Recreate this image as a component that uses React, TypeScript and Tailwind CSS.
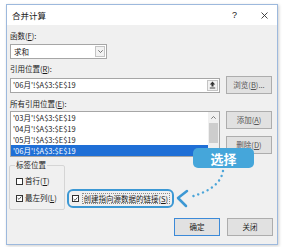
import React from 'react'

const U = ({ c }: { c: string }) => <span className="underline underline-offset-[1px]">{c}</span>

const Btn = ({ children, primary }: { children: React.ReactNode; primary?: boolean }) => (
  <div
    className={`w-[46px] h-[18px] flex items-center justify-center bg-[#e1e1e1] border ${
      primary ? 'border-[#3c8ad8]' : 'border-[#adadad]'
    }`}
  >
    {children}
  </div>
)

const Check = ({ checked }: { checked?: boolean }) => (
  <div className="w-[7px] h-[7px] border border-[#333] bg-white flex items-center justify-center shrink-0">
    {checked && (
      <svg width="6" height="6" viewBox="0 0 6 6">
        <path d="M0.8 3.1 L2.4 4.6 L5.2 1.2" fill="none" stroke="#222" strokeWidth="0.9" />
      </svg>
    )}
  </div>
)

const refs = ["'03月'!$A$3:$E$19", "'04月'!$A$3:$E$19", "'05月'!$A$3:$E$19", "'06月'!$A$3:$E$19"]

export default function App() {
  return (
    <div className="w-[283px] h-[247px] bg-white pt-[4px] pl-[6px] overflow-hidden font-['Noto_Sans_CJK_SC','Noto_Sans',sans-serif] text-[#1a1a1a]">
      <div className="relative w-[272px] h-[241px] border border-[#9db9dd] bg-[#f0f0f0] shadow-[1px_1px_3px_rgba(0,0,0,0.2)] flex flex-col">
        {/* title bar */}
        <div className="h-[20px] bg-white flex items-center pl-[5px] pr-[9px] shrink-0">
          <span className="text-[8.5px] leading-none">合并计算</span>
          <span className="ml-auto text-[9px] leading-none font-['Liberation_Sans',sans-serif]">?</span>
          <svg className="ml-[24px]" width="7" height="7" viewBox="0 0 7 7">
            <path d="M0.5 0.5 L6.5 6.5 M6.5 0.5 L0.5 6.5" stroke="#333" strokeWidth="0.9" />
          </svg>
        </div>

        {/* body */}
        <div className="flex-1 flex flex-col pl-[3px] pr-[4px] text-[7.5px] leading-[10px]">
          <div className="mt-[6px] h-[10px]">
            函数(<U c="F" />):
          </div>
          <div className="mt-[3px] w-[97px] h-[15px] border border-[#a6a6a6] bg-white flex items-center pl-[3px]">
            <span>求和</span>
            <div className="ml-auto mr-[1px] w-[10px] h-[11px] border border-[#c4c4c4] bg-[#f2f2f2] flex items-center justify-center">
              <svg width="5" height="3" viewBox="0 0 5 3">
                <path d="M0.3 0.3 L2.5 2.5 L4.7 0.3" fill="none" stroke="#555" strokeWidth="0.8" />
              </svg>
            </div>
          </div>

          <div className="mt-[5px] h-[10px]">
            引用位置(<U c="R" />):
          </div>
          <div className="mt-[2px] h-[18px] flex items-center gap-[6px]">
            <div className="w-[210px] h-[15px] border border-[#a6a6a6] bg-white flex items-center pl-[2px]">
              <span>'06月'!$A$3:$E$19</span>
              <div className="ml-auto mr-[1px] w-[11px] h-[11px] border border-[#c4c4c4] bg-[#f2f2f2] flex items-center justify-center">
                <svg width="7" height="8" viewBox="0 0 7 8">
                  <path d="M3.5 0.6 L6.2 3.6 L4.5 3.6 L4.5 5.4 L2.5 5.4 L2.5 3.6 L0.8 3.6 Z" fill="#333" />
                  <path d="M0.8 7 L6.2 7" stroke="#333" strokeWidth="0.9" />
                </svg>
              </div>
            </div>
            <Btn>
              <span className="text-[#555]">
                浏览(<U c="B" />)...
              </span>
            </Btn>
          </div>

          <div className="mt-[5px] h-[10px]">
            所有引用位置(<U c="E" />):
          </div>
          <div className="mt-[2px] flex items-start gap-[6px]">
            <div className="w-[210px] h-[46px] border border-[#a6a6a6] bg-white flex">
              <div className="flex-1 flex flex-col">
                {refs.map((r, i) => (
                  <div
                    key={r}
                    className={`h-[11px] leading-[11px] pl-[2px] ${i === 3 ? 'bg-[#1f6fd6] text-white' : ''}`}
                  >
                    {r}
                  </div>
                ))}
              </div>
              <div className="w-[11px] flex flex-col bg-[#f0f0f0]">
                <div className="h-[11px] flex items-center justify-center">
                  <svg width="5" height="3" viewBox="0 0 5 3">
                    <path d="M0.3 2.7 L2.5 0.5 L4.7 2.7" fill="none" stroke="#606060" strokeWidth="0.8" />
                  </svg>
                </div>
                <div className="mx-[1px] h-[20px] bg-[#cdcdcd]" />
              </div>
            </div>
            <div className="flex flex-col gap-[7px]">
              <Btn>
                <span className="text-[#555]">
                  添加(<U c="A" />)
                </span>
              </Btn>
              <Btn>
                <span className="text-[#555]">
                  删除(<U c="D" />)
                </span>
              </Btn>
            </div>
          </div>

          <div className="mt-[3px] flex items-start">
            <fieldset className="ml-[-1px] w-[56px] h-[50px] border border-[#d5d5d5] rounded-[2px] pl-[6px] pb-[5px]">
              <legend className="ml-[-1px] px-[1px] h-[10px] leading-[10px]">标签位置</legend>
              <div className="mt-[6px] h-[10px] flex items-center gap-[2px]">
                <Check />
                <span>
                  首行(<U c="T" />)
                </span>
              </div>
              <div className="mt-[7px] h-[10px] flex items-center gap-[2px]">
                <Check checked />
                <span>
                  最左列(<U c="L" />)
                </span>
              </div>
            </fieldset>
            <div className="ml-[2px] mt-[29px] w-[107px] h-[19px] border-[2.5px] border-[#3c98d4] rounded-[6px] flex items-center pl-[2.5px] gap-[3px]">
              <Check checked />
              <span className="border border-dotted border-[#8a8a8a] px-[1px] leading-[9px]">
                创建指向源数据的链接(<U c="S" />)
              </span>
            </div>
          </div>

          <div className="mt-auto mb-[8px] flex justify-end gap-[7px]">
            <Btn primary>确定</Btn>
            <Btn>关闭</Btn>
          </div>
        </div>

        {/* annotation */}
        <svg className="absolute left-[-7px] top-[-5px] pointer-events-none" width="283" height="247" viewBox="0 0 283 247">
          <path
            d="M223 171 C221 182 212 191 190 197"
            fill="none"
            stroke="#4ba5d9"
            strokeWidth="2.4"
            strokeLinecap="round"
            strokeDasharray="0.1 5"
          />
          <path
            d="M187 191 L178 198 L186 206"
            fill="none"
            stroke="#3c98d4"
            strokeWidth="2.5"
            strokeLinecap="round"
            strokeLinejoin="round"
          />
        </svg>
        <div className="absolute left-[186px] top-[143px] w-[61px] h-[20px] rounded-[5px] bg-[#45a6da] flex items-center justify-center text-white text-[13px] font-bold leading-none">
          选择
        </div>
      </div>
    </div>
  )
}
